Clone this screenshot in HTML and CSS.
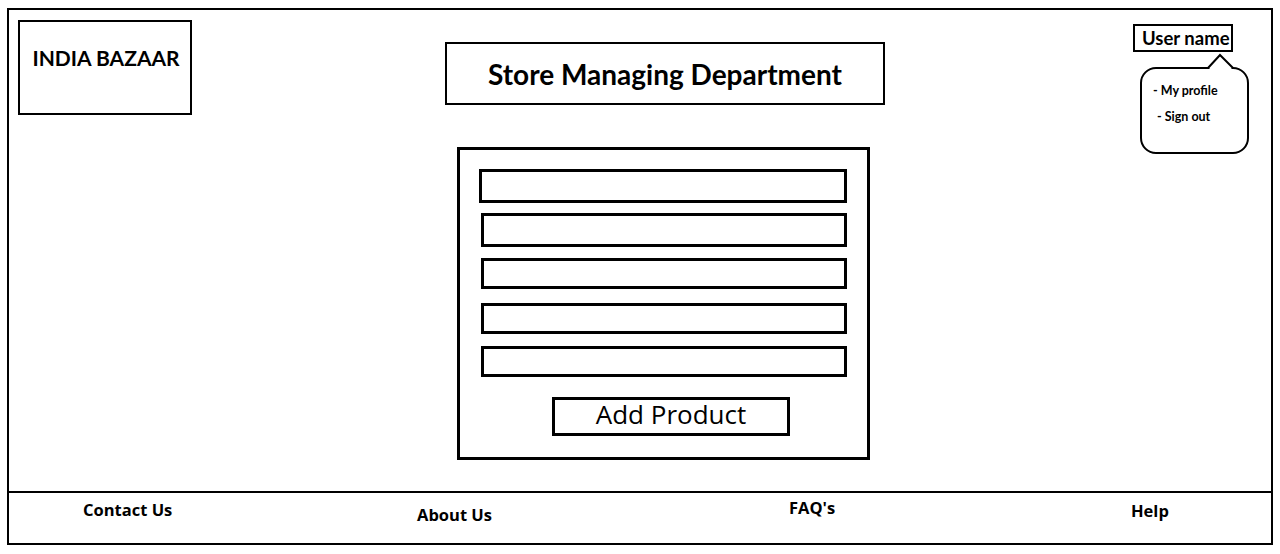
FILE: index.html
```html
<!DOCTYPE html>
<html lang="en">
<head>
    <meta charset="UTF-8" />
    <meta name="viewport" content="width=device-width, initial-scale=1.0" />
    <title>India Bazaar | Store Managing Department</title>
    <link rel="stylesheet" href="styles.css">
</head>
<body>
<div class="page">
    <div class="main">
        <div class="logo">
            <h1>INDIA BAZAAR</h1>
        </div>

        <div class="center">
            <div class="title">
                <h2>Store Managing Department</h2>
            </div>

            <form class="product-form" onsubmit="return false">
                <input class="field field-tall first" type="text" />
                <input class="field field-tall" type="text" />
                <input class="field" type="text" />
                <input class="field" type="text" />
                <input class="field" type="text" />
                <button class="add-btn" type="submit">Add Product</button>
            </form>
        </div>

        <div class="user">
            <div class="user-name">User name</div>
            <div class="user-menu">
                <svg class="menu-tip" width="30" height="18" viewBox="0 0 30 18">
                    <rect x="3.5" y="13" width="22" height="4" fill="#fff" />
                    <path d="M2 15 L14 2 L27 15" fill="#fff" stroke="#000" stroke-width="2" />
                </svg>
                <a href="#" class="menu-item">- My profile</a>
                <a href="#" class="menu-item second">- Sign out</a>
            </div>
        </div>
    </div>

    <footer>
        <a href="#" class="foot-link contact">Contact Us</a>
        <a href="#" class="foot-link about">About Us</a>
        <a href="#" class="foot-link faq">FAQ's</a>
        <a href="#" class="foot-link help">Help</a>
    </footer>
</div>
</body>
</html>
```

FILE: styles.css
```css
* {
    box-sizing: border-box;
    margin: 0;
    padding: 0;
}

body {
    font-family: 'Lato', 'Open Sans', sans-serif;
    background: #fff;
    color: #000;
}

.page {
    margin: 8px 0 0 7px;
    width: 1266px;
    height: 537px;
    border: 2px solid #000;
    display: flex;
    flex-direction: column;
}

.main {
    display: flex;
    height: 481px;
}

/* logo */
.logo {
    margin: 10px 0 0 9px;
    width: 174px;
    height: 95px;
    border: 2px solid #000;
    padding: 24px 0 0 2px;
    text-align: center;
}

h1 {
    font-size: 21px;
    font-weight: 700;
    line-height: 24px;
    white-space: nowrap;
}

/* title + form column */
.center {
    margin-left: 253px;
    width: 440px;
    display: flex;
    flex-direction: column;
    align-items: flex-start;
}

.title {
    margin-top: 32px;
    width: 440px;
    height: 63px;
    border: 2px solid #000;
    display: flex;
    align-items: center;
    justify-content: center;
}

h2 {
    font-size: 28px;
    font-weight: 700;
}

.product-form {
    margin: 42px 0 0 12px;
    width: 413px;
    height: 313px;
    border: 3px solid #000;
    padding: 19px 0 0 19px;
    display: flex;
    flex-direction: column;
    align-items: flex-start;
}

.field {
    width: 366px;
    height: 31px;
    margin-left: 2px;
    border: 3px solid #000;
    border-radius: 0;
    background: #fff;
    outline: none;
}

.field-tall {
    height: 34px;
}

.field.first {
    width: 368px;
    margin-left: 0;
}

.field:nth-child(2) { margin-top: 10px; }
.field:nth-child(3) { margin-top: 11px; }
.field:nth-child(4) { margin-top: 14px; }
.field:nth-child(5) { margin-top: 12px; }

.add-btn {
    margin: 20px 0 0 73px;
    width: 238px;
    height: 39px;
    border: 3px solid #000;
    background: #fff;
    padding-bottom: 5px;
    font-family: 'Open Sans', sans-serif;
    font-size: 26px;
    line-height: 1;
    color: #000;
    cursor: pointer;
}

/* user area */
.user {
    margin: 14px 0 0 248px;
    position: relative;
}

.user-name {
    width: 100px;
    height: 28px;
    border: 2px solid #000;
    padding-left: 7px;
    font-size: 18.5px;
    font-weight: 700;
    line-height: 24px;
    white-space: nowrap;
}

.user-menu {
    position: absolute;
    left: 7px;
    top: 43px;
    width: 109px;
    height: 87px;
    border: 2px solid #000;
    border-radius: 16px;
    background: #fff;
    padding: 14px 0 0 11px;
    display: flex;
    flex-direction: column;
    gap: 10px;
}

.menu-tip {
    position: absolute;
    left: 64px;
    top: -16px;
}

.menu-item {
    font-size: 12.5px;
    font-weight: 700;
    line-height: 16px;
    color: #000;
    text-decoration: none;
}

.menu-item.second {
    padding-left: 4px;
}

/* footer */
footer {
    border-top: 2px solid #000;
    height: 50px;
    display: flex;
    align-items: flex-start;
    padding-left: 74px;
}

.foot-link {
    font-family: 'Open Sans', sans-serif;
    font-size: 16.5px;
    font-weight: 700;
    line-height: 20px;
    color: #000;
    text-decoration: none;
}

.contact {
    width: 334px;
    margin-top: 7px;
}

.about {
    width: 372px;
    margin-top: 12px;
}

.faq {
    width: 342px;
    margin-top: 5px;
}

.help {
    margin-top: 8px;
}
```
